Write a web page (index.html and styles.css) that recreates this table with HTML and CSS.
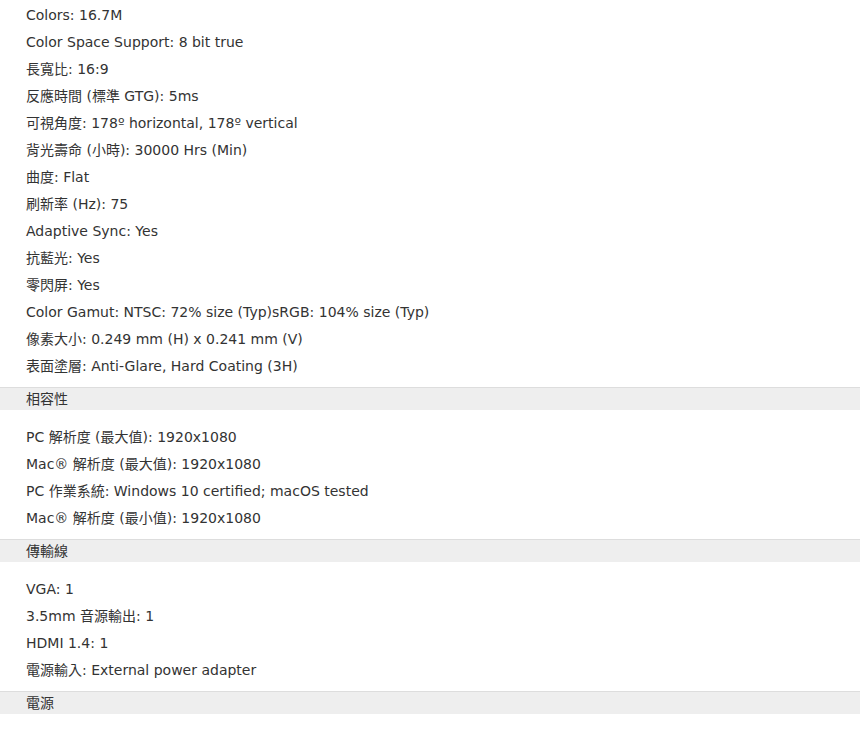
FILE: index.html
```html
<!DOCTYPE html>
<html lang="zh-Hant">
<head>
<meta charset="utf-8">
<title>Specs</title>
<link rel="stylesheet" href="styles.css">
</head>
<body>
<section class="spec">
  <ul class="spec-list spec-list--first">
    <li>Colors: 16.7M</li>
    <li>Color Space Support: 8 bit true</li>
    <li>長寬比: 16:9</li>
    <li>反應時間 (標準 GTG): 5ms</li>
    <li>可視角度: 178º horizontal, 178º vertical</li>
    <li>背光壽命 (小時): 30000 Hrs (Min)</li>
    <li>曲度: Flat</li>
    <li>刷新率 (Hz): 75</li>
    <li>Adaptive Sync: Yes</li>
    <li>抗藍光: Yes</li>
    <li>零閃屏: Yes</li>
    <li>Color Gamut: NTSC: 72% size (Typ)sRGB: 104% size (Typ)</li>
    <li>像素大小: 0.249 mm (H) x 0.241 mm (V)</li>
    <li>表面塗層: Anti-Glare, Hard Coating (3H)</li>
  </ul>
</section>
<section class="spec">
  <h3 class="spec-head">相容性</h3>
  <ul class="spec-list">
    <li>PC 解析度 (最大值): 1920x1080</li>
    <li>Mac® 解析度 (最大值): 1920x1080</li>
    <li>PC 作業系統: Windows 10 certified; macOS tested</li>
    <li>Mac® 解析度 (最小值): 1920x1080</li>
  </ul>
</section>
<section class="spec">
  <h3 class="spec-head">傳輸線</h3>
  <ul class="spec-list">
    <li>VGA: 1</li>
    <li>3.5mm 音源輸出: 1</li>
    <li>HDMI 1.4: 1</li>
    <li>電源輸入: External power adapter</li>
  </ul>
</section>
<section class="spec">
  <h3 class="spec-head">電源</h3>
</section>
</body>
</html>
```
FILE: styles.css
```css
html, body {
  margin: 0;
  padding: 0;
  background: #fff;
}
body {
  font-family: "DejaVu Sans", "Noto Sans CJK TC", sans-serif;
  font-size: 14px;
  color: #333;
}
.spec-list {
  list-style: none;
  margin: 0;
  padding: 14px 0 7px 26px;
}
.spec-list--first {
  padding-top: 2px;
}
.spec-list li {
  line-height: 27px;
  height: 27px;
  white-space: nowrap;
}
.spec-head {
  margin: 0;
  font-weight: normal;
  font-size: 14px;
  height: 22px;
  line-height: 22px;
  padding-left: 26px;
  background: #eeeeee;
  border-top: 1px solid #dddddd;
}
```
